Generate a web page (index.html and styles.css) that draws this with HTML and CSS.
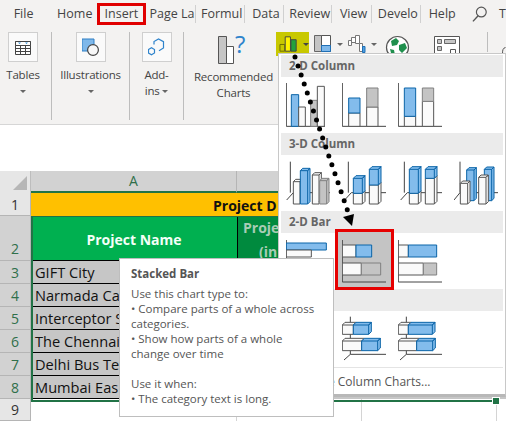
FILE: index.html
```html
<!DOCTYPE html>
<html lang="en">
<head>
    <meta charset="UTF-8">
    <title>Insert chart</title>
    <link rel="stylesheet" href="styles.css">
</head>
<body>
<div class="page">

    <!-- Tabs -->
    <div class="tabs">
        <span class="tab t-file">File</span>
        <span class="tab t-home">Home</span>
        <span class="tab t-insert">Insert</span>
        <span class="tab t-page sep">Page La</span>
        <span class="tab t-formul sep">Formul</span>
        <span class="tab t-data sep">Data</span>
        <span class="tab t-review sep">Review</span>
        <span class="tab t-view sep">View</span>
        <span class="tab t-dev sep">Develo</span>
        <span class="tab t-help">Help</span>
        <svg class="search" width="18" height="18" viewBox="0 0 18 18"><circle cx="10.5" cy="7" r="5" fill="none" stroke="#555" stroke-width="1.2"/><path d="M7 11 L2 16.5" stroke="#555" stroke-width="1.4"/></svg>
        <span class="tab t-tell">T</span>
    </div>

    <!-- Ribbon -->
    <div class="ribbon">
        <div class="group g-tables">
            <div class="icon-box">
                <svg width="16" height="16" viewBox="0 0 16 16"><path d="M.5 2.5h15v13H.5z" fill="#fff" stroke="#444"/><path d="M.5 2.5h15v4H.5z" fill="#fff" stroke="#444"/><path d="M.5 9.5h15M.5 12.5h15M5.5 6.5v9M10.5 6.5v9" stroke="#444"/><path d="M3 3.5l1.5 1.5 1.5-1.5zM10 3.5l1.5 1.5 1.5-1.5z" fill="#2f8ad0"/></svg>
            </div>
            <div class="label">Tables</div>
            <div class="caret"></div>
        </div>
        <div class="group g-illus">
            <div class="icon-box">
                <svg width="18" height="18" viewBox="0 0 18 18"><path d="M0 1h12v12H0z" fill="#7fb8ea" stroke="#2f7fc4"/><circle cx="11" cy="12" r="5.4" fill="#f8f8f8" stroke="#444" stroke-width="1.2"/></svg>
            </div>
            <div class="label">Illustrations</div>
            <div class="caret"></div>
        </div>
        <div class="group g-addins">
            <div class="icon-box">
                <svg width="18" height="18" viewBox="0 0 18 18"><path d="M6 6.5V3.5L10.5 1l5 2.7v6.3l-4.5 2.7" fill="none" stroke="#2f84cc" stroke-width="1.2"/><path d="M.5 11.500l3-1.800 3 1.800v3.500l-3 1.800-3-1.800z" fill="none" stroke="#2f84cc" stroke-width="1.2"/></svg>
            </div>
            <div class="label">Add-<br>ins <i class="caret inline"></i></div>
        </div>
        <div class="group g-rec">
            <svg width="32" height="30" viewBox="0 0 32 30"><path d="M.5 1.500h8v27h-8z" fill="#c6c6c6" stroke="#555"/><path d="M8.500 11.500h7v17h-7z" fill="#fff" stroke="#555"/><text x="17" y="18" class="qmark">?</text></svg>
            <div class="label">Recommended<br>Charts</div>
        </div>
        <div class="chart-btns">
            <div class="btn-col">
                <svg width="22" height="18" viewBox="0 0 22 18"><path d="M1 9.500h5v7H1z" fill="none" stroke="#6b6b00"/><path d="M6.500 1.500h5.500v15H6.500z" fill="#fff200" stroke="#444"/><path d="M12.500 4.500h5.500v12h-5.500z" fill="#23a23c" stroke="#444"/></svg>
                <i class="caret dark"></i>
            </div>
            <div class="btn btn-first">
                <svg width="18" height="18" viewBox="0 0 18 18"><path d="M.5 .5h7v16h-7z" fill="#c4c4c4" stroke="#666"/><path d="M7.500 .5h9v16h-9z" fill="#fff" stroke="#555"/><path d="M7.500 10.500h9v6h-9z" fill="#7fb8ea" stroke="#1f6fb5"/></svg>
                <i class="caret"></i>
            </div>
            <div class="btn">
                <svg width="18" height="18" viewBox="0 0 18 18"><path d="M.5 5.500h3v5h-3zM3.500 2.500h4v5h-4zM7.500 .5h4v8h-4z" fill="#fff" stroke="#777"/><path d="M11.500 8.500h3v8h-3z" fill="#fff" stroke="#777"/><path d="M14.500 11.500h2.500v6h-2.500z" fill="#4f9fe0" stroke="#1f6fb5"/></svg>
                <i class="caret"></i>
            </div>
            <svg class="globe" width="25" height="22" viewBox="0 0 25 22"><circle cx="12.500" cy="12.500" r="11" fill="#fff" stroke="#555" stroke-width="1.200"/><path d="M6 6l5-3 3 3-2 4-5 1zM14 10l6-2 2 5-5 5-3-3zM5 14l4 1 1 5-4-2z" fill="#1f8f4d"/></svg>
            <svg class="pivot" width="26" height="22" viewBox="0 0 26 22"><path d="M.5 .5h25v21H.5z" fill="#fff" stroke="#555"/><path d="M3.500 3.500h4v4h-4zM3.500 10.500h4v4h-4zM10.500 3.500h11v4h-11z" fill="#c6c6c6" stroke="#666"/><path d="M16.500 13.500h5v8h-5z" fill="#fff" stroke="#555"/></svg>
            <div class="rb-sep"></div>
            <svg class="edge-icon" width="4" height="7" viewBox="0 0 4 7"><path d="M3.500 .5C1 1 .5 3 .5 6.500" fill="none" stroke="#555"/></svg>
        </div>
    </div>

    <!-- Blank formula strip -->
    <div class="formula-strip"></div>

    <!-- Sheet -->
    <div class="sheet">
        <div class="sheet-row r-head">
            <div class="corner"><i></i></div>
            <div class="col-head col-a">A</div>
            <div class="col-head col-rest"></div>
        </div>
        <div class="sheet-row r-title">
            <div class="row-head plain">1</div>
            <div class="title-cell">Project D</div>
        </div>
        <div class="sheet-row r-tall">
            <div class="row-head tall">2</div>
            <div class="head-cell">Project Name</div>
            <div class="head-cell dark">
                <span>Proje</span>
                <span class="second">(in</span>
            </div>
        </div>
        <div class="sheet-row"><div class="row-head">3</div><div class="cell">GIFT City</div><div class="filler"></div></div>
        <div class="sheet-row"><div class="row-head">4</div><div class="cell">Narmada Ca</div><div class="filler"></div></div>
        <div class="sheet-row"><div class="row-head">5</div><div class="cell">Interceptor S</div><div class="filler"></div></div>
        <div class="sheet-row"><div class="row-head">6</div><div class="cell">The Chennai</div><div class="filler"></div></div>
        <div class="sheet-row"><div class="row-head">7</div><div class="cell">Delhi Bus Te</div><div class="filler"></div></div>
        <div class="sheet-row"><div class="row-head">8</div><div class="cell">Mumbai Eas</div><div class="filler"></div></div>
        <div class="sheet-row r-last">
            <div class="row-head plain">9</div>
            <div class="blank b-a"></div>
            <div class="blank b-b"></div>
            <div class="blank b-c"></div>
        </div>
        <div class="sel-frame"><i class="handle"></i></div>
    </div>

    <!-- Chart gallery -->
    <div class="gallery">
        <div class="gal-head">2-D Column</div>
        <div class="gal-row">
            <svg class="ch" viewBox="0 -9 168 159">
                <path class="ax" d="M1 0V130H117"/>
                <path class="bl" d="M16 35h22v95h-22z"/><path class="wh" d="M38 72h20v58h-20z"/>
                <path class="gr" d="M74 52h20v78h-20z"/><path class="wh" d="M94 10h21v120h-21z"/>
            </svg>
            <svg class="ch" viewBox="0 -9 168 159">
                <path class="ax" d="M1 0V130H132"/>
                <path class="wh" d="M20 90h34v40h-34z"/><path class="bl" d="M20 45h34v45h-34z"/>
                <path class="wh" d="M74 72h34v58h-34z"/><path class="gr" d="M74 15h34v57h-34z"/>
            </svg>
            <svg class="ch" viewBox="0 -9 168 159">
                <path class="ax" d="M1 0V130H132"/>
                <path class="wh" d="M19 100h34v30h-34z"/><path class="bl" d="M19 15h34v85h-34z"/>
                <path class="wh" d="M73 55h34v75h-34z"/><path class="gr" d="M73 15h34v40h-34z"/>
            </svg>
        </div>

        <div class="gal-head">3-D Column</div>
        <div class="gal-row">
            <svg class="ch" viewBox="0 -6 168 159">
                <path class="ax" d="M13 5V98M2 120L22 98M22 98H132"/>
                <path class="wh" d="M22 65h20v67h-20zM22 65l7-7h20l-7 7M42 65l7-7v67l-7 7"/>
                <path class="bl" d="M43 32h22v100h-22zM43 32l7-7h22l-7 7M65 32l7-7v100l-7 7"/>
                <path class="wh" d="M79 45h20v87h-20zM79 45l7-7h20l-7 7M99 45l7-7v80l-7 7"/>
                <path class="gr" d="M101 62h21v70h-21zM101 62l7-7h21l-7 7M122 62l7-7v70l-7 7"/>
            </svg>
            <svg class="ch" viewBox="0 -6 168 159">
                <path class="ax" d="M19 5V98M8 120L28 98M28 98H132"/>
                <path class="wh" d="M34 100h27v32h-27zM61 100l8-8v32l-8 8"/>
                <path class="bl" d="M34 55h27v45h-27zM34 55l8-8h27l-8 8M61 55l8-8v45l-8 8"/>
                <path class="wh" d="M82 75h27v57h-27zM109 75l8-8v57l-8 8"/>
                <path class="bl" d="M82 28h27v47h-27zM82 28l8-8h27l-8 8M109 28l8-8v47l-8 8"/>
            </svg>
            <svg class="ch" viewBox="0 -6 168 159">
                <path class="ax" d="M19 5V98M8 120L28 98M28 98H132"/>
                <path class="wh" d="M34 100h27v32h-27zM61 100l8-8v32l-8 8"/>
                <path class="bl" d="M34 28h27v72h-27zM34 28l8-8h27l-8 8M61 28l8-8v72l-8 8"/>
                <path class="wh" d="M82 55h27v77h-27zM109 55l8-8v77l-8 8"/>
                <path class="bl" d="M82 28h27v27h-27zM82 28l8-8h27l-8 8M109 28l8-8v27l-8 8"/>
            </svg>
            <svg class="ch" viewBox="0 -6 168 159">
                <path class="ax" d="M18 5V98M0 120L18 98M18 98H132"/>
                <path class="bl" d="M38 30h22v92h-22zM38 30l7-7h22l-7 7M60 30l7-7v92l-7 7"/>
                <path class="wh" d="M19 70h22v62h-22zM19 70l7-7h22l-7 7M41 70l7-7v62l-7 7"/>
                <path class="bl" d="M91 28h22v94h-22zM91 28l7-7h22l-7 7M113 28l7-7v94l-7 7"/>
                <path class="wh" d="M74 52h22v80h-22zM74 52l7-7h22l-7 7M96 52l7-7v80l-7 7"/>
            </svg>
        </div>

        <div class="gal-head">2-D Bar</div>
        <div class="gal-row">
            <svg class="ch" viewBox="0 0 168 159">
                <path class="ax" d="M1 12V138"/>
                <path class="bl" d="M1 21h120v21H1z"/><path class="wh" d="M1 42h75v21H1z"/>
            </svg>
            <div class="picked">
                <svg class="ch" viewBox="0 0 168 159">
                    <path class="ax" d="M1 12V138H132"/>
                    <path class="wh" d="M1 27h41v36H1z"/><path class="bl" d="M42 27h47v36H42z"/>
                    <path class="wh" d="M1 81h57v36H1z"/><path class="gr" d="M58 81h58v36H58z"/>
                </svg>
            </div>
            <svg class="ch" viewBox="0 0 168 159">
                <path class="ax" d="M1 12V138H132"/>
                <path class="wh" d="M1 27h30v36H1z"/><path class="bl" d="M31 27h85v36H31z"/>
                <path class="wh" d="M1 81h75v36H1z"/><path class="gr" d="M76 81h40v36H76z"/>
            </svg>
        </div>

        <div class="gal-head"></div>
        <div class="gal-row">
            <div class="ch"></div>
            <svg class="ch" viewBox="0 -6 168 159">
                <path class="ax" d="M25 2V115M6 132L25 115M25 115H132"/>
                <path class="wh" d="M1 27h33v28H1zM1 27l8-8h33l-8 8"/>
                <path class="bl" d="M34 27h46v28H34zM34 27l8-8h46l-8 8M80 27l8-8v28l-8 8"/>
                <path class="wh" d="M1 75h58v29H1zM1 75l8-8h58l-8 8"/>
                <path class="bl" d="M59 75h48v29H59zM59 75l8-8h48l-8 8M107 75l8-8v29l-8 8"/>
            </svg>
            <svg class="ch" viewBox="0 -6 168 159">
                <path class="ax" d="M25 2V115M6 132L25 115M25 115H132"/>
                <path class="wh" d="M1 27h30v28H1zM1 27l8-8h30l-8 8"/>
                <path class="bl" d="M31 27h72v28H31zM31 27l8-8h72l-8 8M103 27l8-8v28l-8 8"/>
                <path class="wh" d="M1 75h55v29H1zM1 75l8-8h55l-8 8"/>
                <path class="bl" d="M56 75h48v29H56zM56 75l8-8h48l-8 8M104 75l8-8v29l-8 8"/>
            </svg>
        </div>

        <div class="gal-more">More Column Charts...</div>
    </div>

    <!-- Tooltip -->
    <div class="tooltip">
        <div class="tip-title">Stacked Bar</div>
        <p>Use this chart type to:</p>
        <p>• Compare parts of a whole across</p>
        <p>categories.</p>
        <p>• Show how parts of a whole</p>
        <p>change over time</p>
        <p>&nbsp;</p>
        <p>Use it when:</p>
        <p>• The category text is long.</p>
    </div>

    <!-- Dotted arrow drawn over the screenshot -->
    <svg class="arrow" width="506" height="421" viewBox="0 0 506 421">
        <path d="M295 57L348 212" fill="none" stroke="#000" stroke-width="5" stroke-linecap="round" stroke-dasharray="0 9.5"/>
        <path d="M343 217L354 214L352 226z" fill="#000"/>
    </svg>
</div>
</body>
</html>
```

FILE: styles.css
```css
* {
    margin: 0;
    padding: 0;
    box-sizing: border-box;
}
html, body {
    width: 506px;
    height: 421px;
    overflow: hidden;
}
body {
    font-family: 'Open Sans', sans-serif;
    background-color: #fff;
    color: #444;
}
.page {
    position: relative;
    width: 506px;
    height: 421px;
    overflow: hidden;
}

/* tabs */
.tabs {
    display: flex;
    align-items: center;
    height: 28px;
    background-color: #f3f2f1;
    font-size: 12.5px;
    white-space: nowrap;
}
.tab {
    display: block;
    text-align: center;
    line-height: 18px;
}
.tab.sep {
    padding-left: 4px;
    border-right: 1px solid #d0d0d0;
}
.t-file { width: 48px; }
.t-home { width: 46px; margin-left: 5px; }
.t-insert {
    width: 49px;
    height: 22px;
    line-height: 16px;
    border: 3px solid #e00000;
}
.t-page { width: 50px; }
.t-formul { width: 50px; }
.t-data { width: 40px; }
.t-review { width: 49px; }
.t-view { width: 40px; }
.t-dev { width: 50px; }
.t-help { width: 37px; padding-left: 6px; }
.search { margin-left: 14px; }
.t-tell { margin-left: 10px; }

/* ribbon */
.ribbon {
    display: flex;
    height: 97px;
    padding-top: 4px;
    background-color: #f3f2f1;
    border-bottom: 1px solid #d6d6d6;
    font-size: 11.5px;
    letter-spacing: -0.2px;
}
.group {
    display: flex;
    flex-direction: column;
    align-items: center;
    height: 88px;
    border-right: 1px solid #bdbdbd;
    text-align: center;
    line-height: 16px;
}
.g-tables { width: 52px; padding-right: 5px; }
.g-illus { width: 78px; }
.g-addins { width: 54px; }
.g-rec {
    width: 92px;
    padding: 3px 0 0 7px;
    border-right: none;
}
.icon-box {
    display: flex;
    align-items: center;
    justify-content: center;
    width: 30px;
    height: 30px;
    background-color: #fafafa;
    border: 1px solid #cfcfcf;
}
.group .label {
    margin-top: 5px;
}
.g-rec .label {
    margin-top: 4px;
}
.qmark {
    font-size: 24px;
    font-family: 'Open Sans', sans-serif;
    fill: #2f84cc;
}
.caret {
    width: 0;
    height: 0;
    margin-top: 7px;
    border-left: 3px solid transparent;
    border-right: 3px solid transparent;
    border-top: 3px solid #666;
}
.caret.inline {
    display: inline-block;
    margin: 0 0 2px 0;
}
.chart-btns {
    display: flex;
    align-items: flex-start;
    flex: 1;
}
.btn-col {
    display: flex;
    align-items: center;
    gap: 3px;
    width: 33px;
    height: 24px;
    padding-left: 3px;
    background-color: #c8c800;
}
.btn-col .caret, .btn .caret {
    margin-top: 0;
}
.caret.dark {
    border-top-color: #444;
}
.btn {
    display: flex;
    align-items: center;
    gap: 5px;
    width: 31px;
    height: 24px;
    margin-left: 3px;
}
.btn-first { margin-left: 5px; }
.globe { margin: 3px 0 0 6px; }
.pivot { margin: 4px 0 0 24px; }
.rb-sep {
    width: 1px;
    height: 20px;
    margin-left: 27px;
    background-color: #bdbdbd;
}
.edge-icon { margin: 15px 0 0 14px; }

.formula-strip {
    height: 46px;
    background-color: #fff;
}

/* sheet */
.sheet {
    position: relative;
}
.sheet-row {
    display: flex;
    height: 23px;
}
.sheet-row.r-head { height: 22px; }
.sheet-row.r-tall { height: 45px; }
.sheet-row.r-last { height: 22px; }
.corner {
    position: relative;
    width: 31px;
    background-color: #e6e6e6;
    border-right: 1px solid #bdbdbd;
}
.corner i {
    position: absolute;
    right: 3px;
    bottom: 3px;
    width: 0;
    height: 0;
    border-left: 14px solid transparent;
    border-bottom: 14px solid #b6b6b6;
}
.col-head {
    background-color: #d2d2d2;
    border-bottom: 2px solid #217346;
    border-right: 1px solid #b5b5b5;
    text-align: center;
    font-size: 14px;
    line-height: 20px;
    color: #2f6f4a;
}
.col-a { width: 206px; }
.col-rest { flex: 1; }
.row-head {
    display: flex;
    align-items: center;
    justify-content: center;
    flex: none;
    width: 31px;
    background-color: #d2d2d2;
    border-right: 1px solid #b5b5b5;
    border-bottom: 1px solid #b5b5b5;
    font-size: 14px;
    color: #2f6f4a;
}
.row-head.plain {
    background-color: #e6e6e6;
    color: #333;
}
.row-head.tall {
    align-items: flex-end;
    padding-bottom: 2px;
}
.title-cell {
    flex: 1;
    padding-left: 182px;
    background-color: #ffc000;
    font-size: 14px;
    font-weight: 700;
    line-height: 25px;
    color: #111;
    overflow: hidden;
}
.head-cell {
    display: flex;
    align-items: center;
    justify-content: center;
    width: 206px;
    padding-top: 3px;
    background-color: #00b050;
    border-bottom: 1px solid #000;
    font-size: 14px;
    font-weight: 700;
    color: #f4fff8;
}
.head-cell.dark {
    flex: 1;
    flex-direction: column;
    align-items: flex-start;
    padding: 3px 0 0 5px;
    background-color: #008a3e;
    border-left: 1px solid #000;
    line-height: 24px;
    color: #a9cdb6;
}
.head-cell .second {
    margin-left: 16px;
}
.cell {
    width: 206px;
    padding-left: 4px;
    background-color: #c6c6c6;
    border-bottom: 1px solid #000;
    font-size: 14.6px;
    line-height: 23px;
    white-space: nowrap;
    color: #111;
}
.filler {
    flex: 1;
    background-color: #c6c6c6;
}
.blank {
    background-color: #fff;
    border-right: 1px solid #d4d4d4;
}
.b-a { width: 206px; }
.b-b { width: 125px; }
.b-c { width: 135px; }
.sel-frame {
    position: absolute;
    left: 31px;
    top: 45px;
    width: 466px;
    height: 186px;
    border: 2px solid #217346;
    border-top-width: 1px;
    pointer-events: none;
}
.handle {
    position: absolute;
    right: -4px;
    bottom: -4px;
    width: 6px;
    height: 6px;
    background-color: #217346;
    outline: 1px solid #fff;
}

/* gallery */
.gallery {
    position: absolute;
    left: 278px;
    top: 53px;
    width: 228px;
    height: 344px;
    padding: 1px 2px 0;
    background-color: #fff;
    border: 1px solid #c8c8c8;
    border-bottom: 3px solid #b8b8b8;
}
.gal-head {
    height: 22px;
    padding-left: 8px;
    background-color: #ebebeb;
    font-size: 11.5px;
    font-weight: 700;
    line-height: 22px;
    color: #666;
}
.gal-row {
    display: flex;
    height: 56px;
    padding: 3px 0 0 5px;
}
.ch {
    display: block;
    flex: none;
    width: 56px;
    height: 53px;
}
.ax {
    fill: none;
    stroke: #444;
    stroke-width: 3;
}
.wh, .bl, .gr {
    stroke-width: 3;
}
.wh {
    fill: #fafafa;
    stroke: #555;
}
.bl {
    fill: #83bcec;
    stroke: #0b64a8;
}
.gr {
    fill: #c4c4c4;
    stroke: #808080;
}
.picked {
    position: relative;
    flex: none;
    width: 56px;
    height: 53px;
}
.picked::before {
    content: "";
    position: absolute;
    left: -7px;
    top: -7px;
    box-sizing: border-box;
    width: 59px;
    height: 61px;
    background-color: #c4c4c4;
    border: 3px solid #e60000;
}
.picked .ch {
    position: relative;
}
.gal-more {
    padding: 5px 0 0 24px;
    border-top: 1px solid #e4e4e4;
    font-size: 12px;
    color: #555;
    white-space: nowrap;
}

/* tooltip */
.tooltip {
    position: absolute;
    left: 119px;
    top: 258px;
    width: 215px;
    height: 159px;
    padding: 7px 0 0 11px;
    background-color: #fff;
    border: 1px solid #bebebe;
    font-size: 11.5px;
    line-height: 15px;
    color: #555;
    white-space: nowrap;
}
.tip-title {
    margin-bottom: 5px;
    font-weight: 700;
}

.arrow {
    position: absolute;
    left: 0;
    top: 0;
    pointer-events: none;
}
```
